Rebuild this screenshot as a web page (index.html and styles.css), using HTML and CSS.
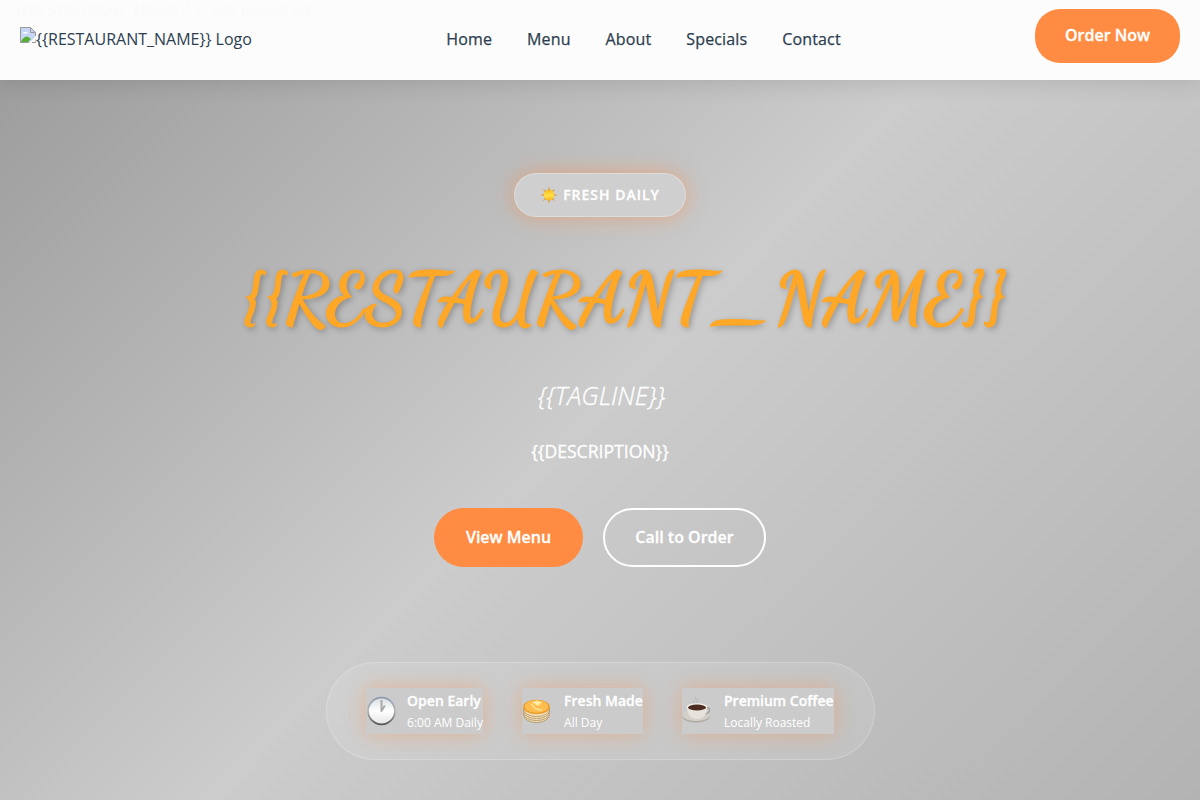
FILE: index.html
```html
<!DOCTYPE html>
<html lang="en">
<head>
<meta charset="utf-8">
<title>{{RESTAURANT_NAME}}</title>
<link rel="stylesheet" href="styles.css">
</head>
<body>
<header class="header">
  <a class="logo">
    <svg class="logo-icon" width="16" height="16" viewBox="0 0 16 16"><path d="M.5.5h10l5 5v10H.5z" fill="#c5d7f5"/><path d="M3 6.500c0-1.500 1.500-2 2-1 1-1.500 3-.5 2.500 1z" fill="#fff"/><path d="M1 15c1-3.500 4-5.500 6.500-5.500L11 12l-3 3z" fill="#58ad35"/><path d="M9 16 16 9v7z" fill="#fcfcfc"/><path d="M.5 16V.5h10l5 5V9M10.500.5v5h5M0 15.500h9M12 15.500h4V12" fill="none" stroke="#9a9a9a"/></svg><span>{{RESTAURANT_NAME}} Logo</span>
  </a>
  <nav class="nav"><a>Home</a><a>Menu</a><a>About</a><a>Specials</a><a>Contact</a></nav>
  <a class="btn order">Order Now</a>
  <span class="ghost">{{RESTAURANT_NAME}} Fresh Breakfast</span>
</header>
<main class="hero">
  <div class="badge">
    <svg width="18" height="18" viewBox="0 0 18 18"><defs><linearGradient id="sun" x1="0" y1="0" x2="0" y2="1"><stop offset="0" stop-color="#ffb711"/><stop offset=".55" stop-color="#ffe04a"/><stop offset="1" stop-color="#fbb416"/></linearGradient></defs><path d="M9 .3 10 4H8zM9 17.700 10 14H8zM.3 9 4 8v2zM17.700 9 14 8v2zM2.800 2.800 6 4.800 4.800 6zM15.200 2.800 12 4.800 13.200 6zM2.800 15.200 6 13.200 4.800 12zM15.200 15.200 12 13.200 13.200 12z" fill="#dd9a3c"/><circle cx="9" cy="9" r="5.200" fill="url(#sun)"/></svg>
    <span>Fresh Daily</span>
  </div>
  <h1 class="title">{{RESTAURANT_NAME}}</h1>
  <p class="tagline">{{TAGLINE}}</p>
  <p class="description">{{DESCRIPTION}}</p>
  <div class="actions"><a class="btn primary">View Menu</a><a class="btn outline">Call to Order</a></div>
  <section class="features">
    <div class="feature">
      <svg width="31" height="32" viewBox="0 0 31 32"><defs><linearGradient id="rim" x1="0" y1="0" x2="0" y2="1"><stop offset="0" stop-color="#8e9bad"/><stop offset=".5" stop-color="#b5b5b5"/><stop offset="1" stop-color="#555"/></linearGradient><linearGradient id="face" x1="0" y1="0" x2="0" y2="1"><stop offset="0" stop-color="#d9dde0"/><stop offset=".5" stop-color="#fff"/><stop offset="1" stop-color="#e4e4e4"/></linearGradient></defs><circle cx="15.500" cy="16" r="13.400" fill="url(#face)" stroke="url(#rim)" stroke-width="1.700"/><path d="M15.500 5v11l3.300-5.500" fill="none" stroke="#a9aaab" stroke-width="2" stroke-linejoin="round"/></svg>
      <div><strong>Open Early</strong><span>6:00 AM Daily</span></div>
    </div>
    <div class="feature">
      <svg width="31" height="32" viewBox="0 0 31 32"><g stroke="#a98a58" stroke-width=".8" fill="#f3e2bd"><ellipse cx="14.500" cy="20.500" rx="12.500" ry="7"/><ellipse cx="14.500" cy="18.500" rx="13" ry="7"/><ellipse cx="14.500" cy="16.500" rx="13" ry="7"/><ellipse cx="14.500" cy="14.500" rx="13" ry="7"/></g><ellipse cx="14.500" cy="12" rx="13.300" ry="7.300" fill="#e99b2c"/><ellipse cx="14.500" cy="11.500" rx="11.800" ry="6.200" fill="#ffbd50"/><path d="m10 7.500 5-2 5 2-4 3.500z" fill="#ffeaa0"/><path d="m9 9 5 5 6 1" fill="none" stroke="#ffdf91" stroke-width="1.500"/></svg>
      <div><strong>Fresh Made</strong><span>All Day</span></div>
    </div>
    <div class="feature">
      <svg width="31" height="32" viewBox="0 0 31 32"><path d="M12 8c-2-3 3-3 1-6M15 8c-1-3 2-3 0-5" fill="none" stroke="#b9b9b9"/><ellipse cx="14" cy="21.500" rx="13.500" ry="6" fill="#aaa79f"/><ellipse cx="14" cy="20.500" rx="13.300" ry="5.500" fill="#d3d0c9"/><path d="M24 13c5-2 5 6-2 6" fill="none" stroke="#a5a29b" stroke-width="1.500"/><path d="M5 12c0 7 3 12 10 12s10-5 10-12z" fill="#e6e3dc"/><ellipse cx="15" cy="12" rx="10.300" ry="3.800" fill="#f3f0ea"/><ellipse cx="15" cy="12.500" rx="9" ry="3" fill="#4c2c20"/></svg>
      <div><strong>Premium Coffee</strong><span>Locally Roasted</span></div>
    </div>
  </section>
</main>
</body>
</html>
```

FILE: styles.css
```css
* { box-sizing: border-box; }
body {
  margin: 0;
  height: 800px;
  overflow: hidden;
  font: 16px/1.6 "Open Sans", sans-serif;
  color: #2c3e50;
  background: linear-gradient(135deg, #999 0%, #ccc 50%, #b3b3b3 100%);
}
p, h1 { margin: 0; }
svg { display: block; flex: none; }
.header {
  position: relative;
  height: 80px;
  padding: 0 20px;
  display: flex;
  justify-content: space-between;
  align-items: center;
  background: #fcfcfc;
  box-shadow: 0 4px 20px rgba(0, 0, 0, .1);
}
.logo { display: flex; width: 232px; line-height: 24px; margin-top: -2px; white-space: nowrap; }
.nav {
  display: flex;
  gap: 35px;
  font-weight: 500;
  letter-spacing: .14px;
  -webkit-text-stroke: .25px currentColor;
}
.ghost { position: absolute; left: 16px; top: -2px; color: #fafafa; }
.btn {
  display: flex;
  align-items: center;
  justify-content: center;
  border-radius: 30px;
  font-weight: 600;
  color: #fff;
  -webkit-text-stroke: .3px currentColor;
}
.order { width: 145px; height: 54px; margin-bottom: 8px; border-radius: 25px; background: #ff8c42; padding-bottom: 1px; }
.hero {
  height: 720px;
  padding-top: 93px;
  display: flex;
  flex-direction: column;
  align-items: center;
  color: #fff;
}
.badge {
  width: 172px;
  height: 44px;
  display: flex;
  align-items: center;
  justify-content: center;
  gap: 5px;
  border: 1px solid rgba(255, 255, 255, .3);
  border-radius: 25px;
  background: #cfcfcf;
  box-shadow: 0 0 20px rgba(255, 140, 66, .5);
  font-size: 14px;
  font-weight: 600;
  letter-spacing: 1px;
  text-transform: uppercase;
  -webkit-text-stroke: .3px currentColor;
}
.title {
  height: 120px;
  margin-top: 21px;
  padding-left: 46px;
  font: 700 72px/120px "Dancing Script", cursive;
  color: #ffa726;
  -webkit-text-stroke: 1px currentColor;
  text-shadow: 2px 2px 6px rgba(0, 0, 0, .3);
  white-space: nowrap;
}
.tagline {
  margin-top: 17px;
  padding-left: 3px;
  font-size: 25.400px;
  line-height: 40px;
  font-weight: 300;
  font-style: italic;
  -webkit-text-stroke: .3px currentColor;
}
.description { margin-top: 20px; font-size: 17.600px; line-height: 32px; -webkit-text-stroke: .3px currentColor; }
.actions { display: flex; gap: 20px; margin-top: 41px; }
.primary { width: 149px; height: 59px; background: #ff8c42; }
.outline { width: 163px; height: 59px; border: 2px solid #fff; }
.features {
  margin-top: 95px;
  width: 549px;
  height: 98px;
  padding: 25px 39px;
  display: flex;
  gap: 39.600px;
  border: 1px solid rgba(255, 255, 255, .2);
  border-radius: 50px;
  background: rgba(255, 255, 255, .1);
}
.feature {
  height: 46px;
  display: flex;
  align-items: center;
  gap: 10.600px;
  background: #cbcbcb;
  box-shadow: 0 0 20px rgba(255, 140, 66, .4);
  white-space: nowrap;
}
.feature strong {
  display: block;
  font-size: 14px;
  line-height: 22px;
  font-weight: 600;
  -webkit-text-stroke: .3px currentColor;
}
.feature span { display: block; font-size: 12px; line-height: 21px; }
```
